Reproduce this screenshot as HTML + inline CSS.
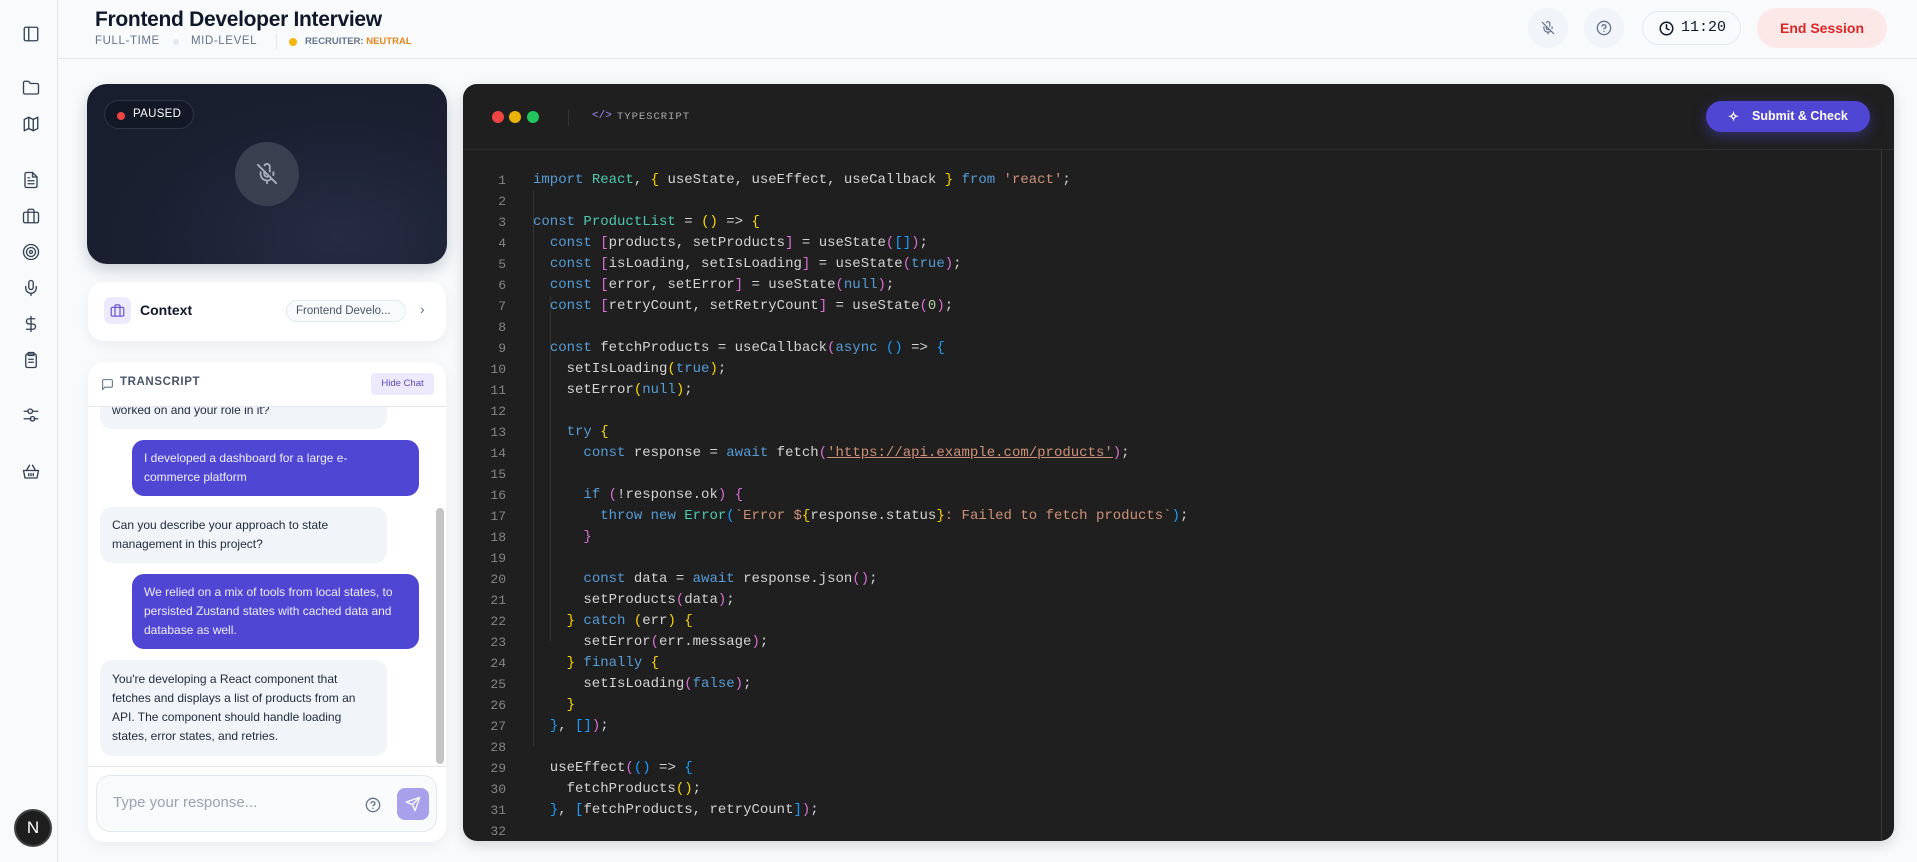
<!DOCTYPE html>
<html><head><meta charset="utf-8"><style>
*{box-sizing:border-box;margin:0;padding:0}
body{width:1917px;height:862px;overflow:hidden;background:#f8fafc;font-family:"Liberation Sans",sans-serif;position:relative;color:#0f172a}
.abs{position:absolute}
.side{left:0;top:0;width:58px;height:862px;background:#f8fafc;border-right:1px solid #e5e7eb}
.si{position:absolute;left:22px;width:18px;height:18px}
.si svg{width:18px;height:18px;fill:none;stroke:#334155;stroke-width:1.8;stroke-linecap:round;stroke-linejoin:round}
.hdr{left:58px;top:0;right:0;height:59px;border-bottom:1px solid #e5e7eb}
.card{background:#fff;border-radius:16px;box-shadow:0 4px 14px rgba(15,23,42,.06)}
.bub{position:absolute;font-size:12px;line-height:19px;padding:9px 12px;border-radius:12px}
.a{left:100px;width:287px;background:#f1f5f9;color:#1e293b}
.u{left:132px;width:287px;background:#5046d4;color:#eef}
.code{font-family:"Liberation Mono",monospace;font-size:14px;color:#d4d4d4;white-space:pre;line-height:21px}
.k{color:#569cd6}.g{color:#4ec9b0}.s{color:#ce9178}.y{color:#ffd700}.p{color:#da70d6}.b{color:#179fff}.n{color:#b5cea8}
.ln{position:absolute;left:463px;width:43px;text-align:right;color:#858585;font-family:"Liberation Mono",monospace;font-size:13px;line-height:21px}
</style></head><body>

<div class="abs side">
 <div class="si" style="top:25px"><svg viewBox="0 0 24 24"><rect x="3" y="3" width="18" height="18" rx="2"/><path d="M9 3v18"/></svg></div>
 <div class="si" style="top:79px"><svg viewBox="0 0 24 24"><path d="M20 20a2 2 0 0 0 2-2V8a2 2 0 0 0-2-2h-7.9a2 2 0 0 1-1.7-.9l-.8-1.2A2 2 0 0 0 7.9 3H4a2 2 0 0 0-2 2v13a2 2 0 0 0 2 2Z"/></svg></div>
 <div class="si" style="top:115px"><svg viewBox="0 0 24 24"><path d="M3 6l6-3 6 3 6-3v15l-6 3-6-3-6 3z"/><path d="M9 3v15M15 6v15"/></svg></div>
 <div class="si" style="top:171px"><svg viewBox="0 0 24 24"><path d="M14 2H6a2 2 0 0 0-2 2v16a2 2 0 0 0 2 2h12a2 2 0 0 0 2-2V8z"/><path d="M14 2v6h6M8 13h8M8 17h8M8 9h2"/></svg></div>
 <div class="si" style="top:207px"><svg viewBox="0 0 24 24"><rect x="2" y="7" width="20" height="14" rx="2"/><path d="M16 21V5a2 2 0 0 0-2-2h-4a2 2 0 0 0-2 2v16"/></svg></div>
 <div class="si" style="top:243px"><svg viewBox="0 0 24 24"><circle cx="12" cy="12" r="10"/><circle cx="12" cy="12" r="6"/><circle cx="12" cy="12" r="2"/></svg></div>
 <div class="si" style="top:279px"><svg viewBox="0 0 24 24"><rect x="9" y="2" width="6" height="12" rx="3"/><path d="M19 10v2a7 7 0 0 1-14 0v-2M12 19v3"/></svg></div>
 <div class="si" style="top:315px"><svg viewBox="0 0 24 24"><path d="M12 2v20M17 5H9.5a3.5 3.5 0 0 0 0 7h5a3.5 3.5 0 0 1 0 7H6"/></svg></div>
 <div class="si" style="top:351px"><svg viewBox="0 0 24 24"><rect x="5" y="4" width="14" height="18" rx="2"/><rect x="8" y="2" width="8" height="4" rx="1"/><path d="M9 11h6M9 15h6"/></svg></div>
 <div class="si" style="top:406px"><svg viewBox="0 0 24 24"><path d="M14 7h7M3 17h9M3 7h5M16 17h5"/><circle cx="11" cy="7" r="3"/><circle cx="14" cy="17" r="3"/></svg></div>
 <div class="si" style="top:463px"><svg viewBox="0 0 24 24"><path d="M2 10h20l-2 10H4z"/><path d="M6 10l4-7M18 10l-4-7M9 14v3M12 14v3M15 14v3"/></svg></div>
 <div class="abs" style="left:14px;top:809px;width:38px;height:38px;border-radius:50%;background:#1e1e1e;border:2px solid #444;color:#fff;font-size:17px;text-align:center;line-height:34px">N</div>
</div>

<div class="abs hdr">
 <div class="abs" style="left:37px;top:8px;font-size:21px;font-weight:bold;letter-spacing:-0.3px">Frontend Developer Interview</div>
 <div class="abs" style="left:37px;top:35px;font-size:11.5px;color:#64748b;letter-spacing:.6px">FULL-TIME</div>
 <div class="abs" style="left:115px;top:39px;width:6px;height:6px;border-radius:50%;background:#e2e8f0"></div>
 <div class="abs" style="left:133px;top:35px;font-size:11.5px;color:#64748b;letter-spacing:.6px">MID-LEVEL</div>
 <div class="abs" style="left:218px;top:33px;width:1px;height:16px;background:#e2e8f0"></div>
 <div class="abs" style="left:231px;top:38px;width:8px;height:8px;border-radius:50%;background:#f5b50a"></div>
 <div class="abs" style="left:247px;top:36px;font-size:9.5px;font-weight:bold;color:#64748b">RECRUITER: <span style="color:#e6841a">NEUTRAL</span></div>
</div>
<div class="abs" style="left:1528px;top:8px;width:40px;height:40px;border-radius:50%;background:#f1f5f9"><svg style="position:absolute;left:13px;top:13px" width="14" height="14" viewBox="0 0 24 24" fill="none" stroke="#64748b" stroke-width="2" stroke-linecap="round"><path d="M2 2l20 20M15 9.3V4a3 3 0 0 0-5.7-1.3M9 9v3a3 3 0 0 0 5.1 2.1M19 10v2a7 7 0 0 1-.1 1.2M5 10v2a7 7 0 0 0 12 5M12 19v3"/></svg></div>
<div class="abs" style="left:1584px;top:8px;width:40px;height:40px;border-radius:50%;background:#f1f5f9"><svg style="position:absolute;left:12px;top:12px" width="16" height="16" viewBox="0 0 24 24" fill="none" stroke="#64748b" stroke-width="2" stroke-linecap="round"><circle cx="12" cy="12" r="10"/><path d="M9.1 9a3 3 0 0 1 5.8 1c0 2-3 3-3 3M12 17h.01"/></svg></div>
<div class="abs" style="left:1642px;top:11px;width:99px;height:34px;border-radius:17px;border:1px solid #e2e8f0;background:#f8fafc"><svg style="position:absolute;left:16px;top:9px" width="15" height="15" viewBox="0 0 24 24" fill="none" stroke="#0f172a" stroke-width="2.4" stroke-linecap="round"><circle cx="12" cy="12" r="10"/><path d="M12 6v6l4 2"/></svg><span style="position:absolute;left:38px;top:7px;font-family:'Liberation Mono',monospace;font-size:15px">11:20</span></div>
<div class="abs" style="left:1757px;top:8px;width:130px;height:40px;border-radius:20px;background:#fde8e8;color:#dc2626;font-size:14px;font-weight:bold;text-align:center;line-height:40px">End Session</div>

<!-- video -->
<div class="abs" style="left:87px;top:84px;width:360px;height:180px;border-radius:20px;background:radial-gradient(ellipse at 70% 85%,#262b44 0%,#1a2030 55%,#171d2c 100%);box-shadow:0 6px 16px rgba(15,23,42,.2)">
 <div class="abs" style="left:17px;top:16px;width:90px;height:29px;border-radius:15px;border:1px solid #2c3446;background:#121826"><div class="abs" style="left:12px;top:11px;width:8px;height:8px;border-radius:50%;background:#ef4444"></div><span class="abs" style="left:28px;top:7px;color:#fff;font-size:11.5px;letter-spacing:.3px">PAUSED</span></div>
 <div class="abs" style="left:148px;top:58px;width:64px;height:64px;border-radius:50%;background:#3a4050"><svg style="position:absolute;left:21px;top:21px" width="22" height="22" viewBox="0 0 24 24" fill="none" stroke="#aab0bb" stroke-width="2" stroke-linecap="round"><path d="M2 2l20 20M15 9.3V4a3 3 0 0 0-5.7-1.3M9 9v3a3 3 0 0 0 5.1 2.1M19 10v2a7 7 0 0 1-.1 1.2M5 10v2a7 7 0 0 0 12 5M12 19v3"/></svg></div>
</div>

<!-- context -->
<div class="abs card" style="left:88px;top:282px;width:358px;height:59px">
 <div class="abs" style="left:16px;top:15px;width:27px;height:27px;border-radius:7px;background:#ede9fe"><svg style="position:absolute;left:6px;top:6px" width="15" height="15" viewBox="0 0 24 24" fill="none" stroke="#6d5bd0" stroke-width="2"><rect x="2" y="7" width="20" height="14" rx="2"/><path d="M16 21V5a2 2 0 0 0-2-2h-4a2 2 0 0 0-2 2v16"/></svg></div>
 <div class="abs" style="left:52px;top:20px;font-size:14px;font-weight:bold">Context</div>
 <div class="abs" style="left:198px;top:18px;width:120px;height:22px;border-radius:11px;border:1px solid #e2e8f0;background:#f8fafc;font-size:11.5px;color:#475569;line-height:20px;padding-left:9px">Frontend Develo...</div>
 <div class="abs" style="left:332px;top:19px;color:#64748b;font-size:14px">›</div>
</div>

<!-- transcript -->
<div class="abs card" style="left:88px;top:362px;width:358px;height:480px;overflow:hidden">
 <svg style="position:absolute;left:13px;top:16px" width="13" height="13" viewBox="0 0 24 24" fill="none" stroke="#64748b" stroke-width="2"><path d="M21 15a2 2 0 0 1-2 2H7l-4 4V5a2 2 0 0 1 2-2h14a2 2 0 0 1 2 2z"/></svg>
 <div class="abs" style="left:32px;top:14px;font-size:11.5px;font-weight:bold;color:#475569;letter-spacing:.6px">TRANSCRIPT</div>
 <div class="abs" style="left:283px;top:11px;width:63px;height:22px;border-radius:4px;background:#ede9fe;color:#5b4bc4;font-size:9.5px;text-align:center;line-height:22px">Hide Chat</div>
 <div class="abs" style="left:0;top:44px;width:358px;height:1px;background:#e5e7eb"></div>
</div>
<div class="abs" style="left:88px;top:407px;width:348px;height:359px;overflow:hidden">
 <div class="bub a" style="left:12px;top:-34px;width:287px">Can you tell me about a recent project you've<br>worked on and your role in it?</div>
 <div class="bub u" style="left:44px;top:33px">I developed a dashboard for a large e-<br>commerce platform</div>
 <div class="bub a" style="left:12px;top:100px">Can you describe your approach to state<br>management in this project?</div>
 <div class="bub u" style="left:44px;top:167px">We relied on a mix of tools from local states, to<br>persisted Zustand states with cached data and<br>database as well.</div>
 <div class="bub a" style="left:12px;top:253px;padding-top:10px;padding-bottom:10px">You're developing a React component that<br>fetches and displays a list of products from an<br>API. The component should handle loading<br>states, error states, and retries.</div>
</div>
<div class="abs" style="left:436px;top:508px;width:8px;height:256px;border-radius:4px;background:#c4c4c4"></div>
<div class="abs" style="left:88px;top:766px;width:358px;height:1px;background:#e5e7eb"></div>
<div class="abs" style="left:96px;top:775px;width:341px;height:57px;border-radius:14px;border:1px solid #e2e8f0;background:#f8fafc">
 <div class="abs" style="left:16px;top:18px;font-size:15px;color:#9ca3af">Type your response...</div>
 <svg style="position:absolute;left:268px;top:21px" width="16" height="16" viewBox="0 0 24 24" fill="none" stroke="#64748b" stroke-width="2" stroke-linecap="round"><circle cx="12" cy="12" r="10"/><path d="M9.1 9a3 3 0 0 1 5.8 1c0 2-3 3-3 3M12 17h.01"/></svg>
 <div class="abs" style="left:300px;top:12px;width:32px;height:32px;border-radius:8px;background:#a8a0ea"><svg style="position:absolute;left:8px;top:8px" width="16" height="16" viewBox="0 0 24 24" fill="none" stroke="#fff" stroke-width="2" stroke-linejoin="round"><path d="M22 2L11 13M22 2l-7 20-4-9-9-4z"/></svg></div>
</div>

<!-- editor -->
<div class="abs" style="left:463px;top:84px;width:1431px;height:757px;border-radius:14px;background:#1f1f1f;overflow:hidden;box-shadow:0 4px 14px rgba(0,0,0,.15)">
 <div class="abs" style="left:29px;top:27px;width:12px;height:12px;border-radius:50%;background:#ef4444"></div>
 <div class="abs" style="left:46px;top:27px;width:12px;height:12px;border-radius:50%;background:#eab308"></div>
 <div class="abs" style="left:64px;top:27px;width:12px;height:12px;border-radius:50%;background:#22c55e"></div>
 <div class="abs" style="left:105px;top:25px;width:1px;height:17px;background:#333"></div>
 <div class="abs" style="left:129px;top:26px;font-family:'Liberation Mono',monospace;font-size:11px;color:#a78bfa">&lt;/&gt;</div>
 <div class="abs" style="left:154px;top:27px;font-family:'Liberation Mono',monospace;font-size:10.5px;color:#aaa;letter-spacing:1px">TYPESCRIPT</div>
 <div class="abs" style="left:1243px;top:17px;width:164px;height:31px;border-radius:16px;background:#5046d4;box-shadow:0 4px 14px rgba(80,70,212,.45);color:#fff;font-size:12.5px;font-weight:bold;line-height:31px;padding-left:46px">Submit &amp; Check<span style="position:absolute;left:22px;top:0;font-size:13px">✧</span></div>
 <div class="abs" style="left:0;top:65px;width:1431px;height:1px;background:#2e2e2e"></div>
 <div class="abs" style="left:1418px;top:66px;width:1px;height:691px;background:#3a3a3a"></div>
 <div class="abs" style="left:70px;top:107px;width:1px;height:555px;background:#353535"></div>
 <div class="abs" style="left:87px;top:212px;width:1px;height:345px;background:#353535"></div>
</div>
<div class="ln" style="top:170px">1<br>2<br>3<br>4<br>5<br>6<br>7<br>8<br>9<br>10<br>11<br>12<br>13<br>14<br>15<br>16<br>17<br>18<br>19<br>20<br>21<br>22<br>23<br>24<br>25<br>26<br>27<br>28<br>29<br>30<br>31<br>32</div>
<div class="abs code" style="left:533px;top:170px;height:671px;overflow:hidden"><span class="k">import</span> <span class="g">React</span>, <span class="y">{</span> useState, useEffect, useCallback <span class="y">}</span> <span class="k">from</span> <span class="s">'react'</span>;

<span class="k">const</span> <span class="g">ProductList</span> = <span class="y">()</span> =&gt; <span class="y">{</span>
  <span class="k">const</span> <span class="p">[</span>products, setProducts<span class="p">]</span> = useState<span class="p">(</span><span class="b">[]</span><span class="p">)</span>;
  <span class="k">const</span> <span class="p">[</span>isLoading, setIsLoading<span class="p">]</span> = useState<span class="p">(</span><span class="k">true</span><span class="p">)</span>;
  <span class="k">const</span> <span class="p">[</span>error, setError<span class="p">]</span> = useState<span class="p">(</span><span class="k">null</span><span class="p">)</span>;
  <span class="k">const</span> <span class="p">[</span>retryCount, setRetryCount<span class="p">]</span> = useState<span class="p">(</span><span class="n">0</span><span class="p">)</span>;

  <span class="k">const</span> fetchProducts = useCallback<span class="p">(</span><span class="k">async</span> <span class="b">()</span> =&gt; <span class="b">{</span>
    setIsLoading<span class="y">(</span><span class="k">true</span><span class="y">)</span>;
    setError<span class="y">(</span><span class="k">null</span><span class="y">)</span>;

    <span class="k">try</span> <span class="y">{</span>
      <span class="k">const</span> response = <span class="k">await</span> fetch<span class="p">(</span><span class="s" style="text-decoration:underline">'https://api.example.com/products'</span><span class="p">)</span>;

      <span class="k">if</span> <span class="p">(</span>!response.ok<span class="p">)</span> <span class="p">{</span>
        <span class="k">throw</span> <span class="k">new</span> <span class="g">Error</span><span class="b">(</span><span class="s">`Error </span><span class="s">$</span><span class="y">{</span>response.status<span class="y">}</span><span class="s">: Failed to fetch products`</span><span class="b">)</span>;
      <span class="p">}</span>

      <span class="k">const</span> data = <span class="k">await</span> response.json<span class="p">()</span>;
      setProducts<span class="p">(</span>data<span class="p">)</span>;
    <span class="y">}</span> <span class="k">catch</span> <span class="y">(</span>err<span class="y">)</span> <span class="y">{</span>
      setError<span class="p">(</span>err.message<span class="p">)</span>;
    <span class="y">}</span> <span class="k">finally</span> <span class="y">{</span>
      setIsLoading<span class="p">(</span><span class="k">false</span><span class="p">)</span>;
    <span class="y">}</span>
  <span class="b">}</span>, <span class="b">[]</span><span class="p">)</span>;

  useEffect<span class="p">(</span><span class="b">()</span> =&gt; <span class="b">{</span>
    fetchProducts<span class="y">()</span>;
  <span class="b">}</span>, <span class="b">[</span>fetchProducts, retryCount<span class="b">]</span><span class="p">)</span>;

</div>
</body></html>
